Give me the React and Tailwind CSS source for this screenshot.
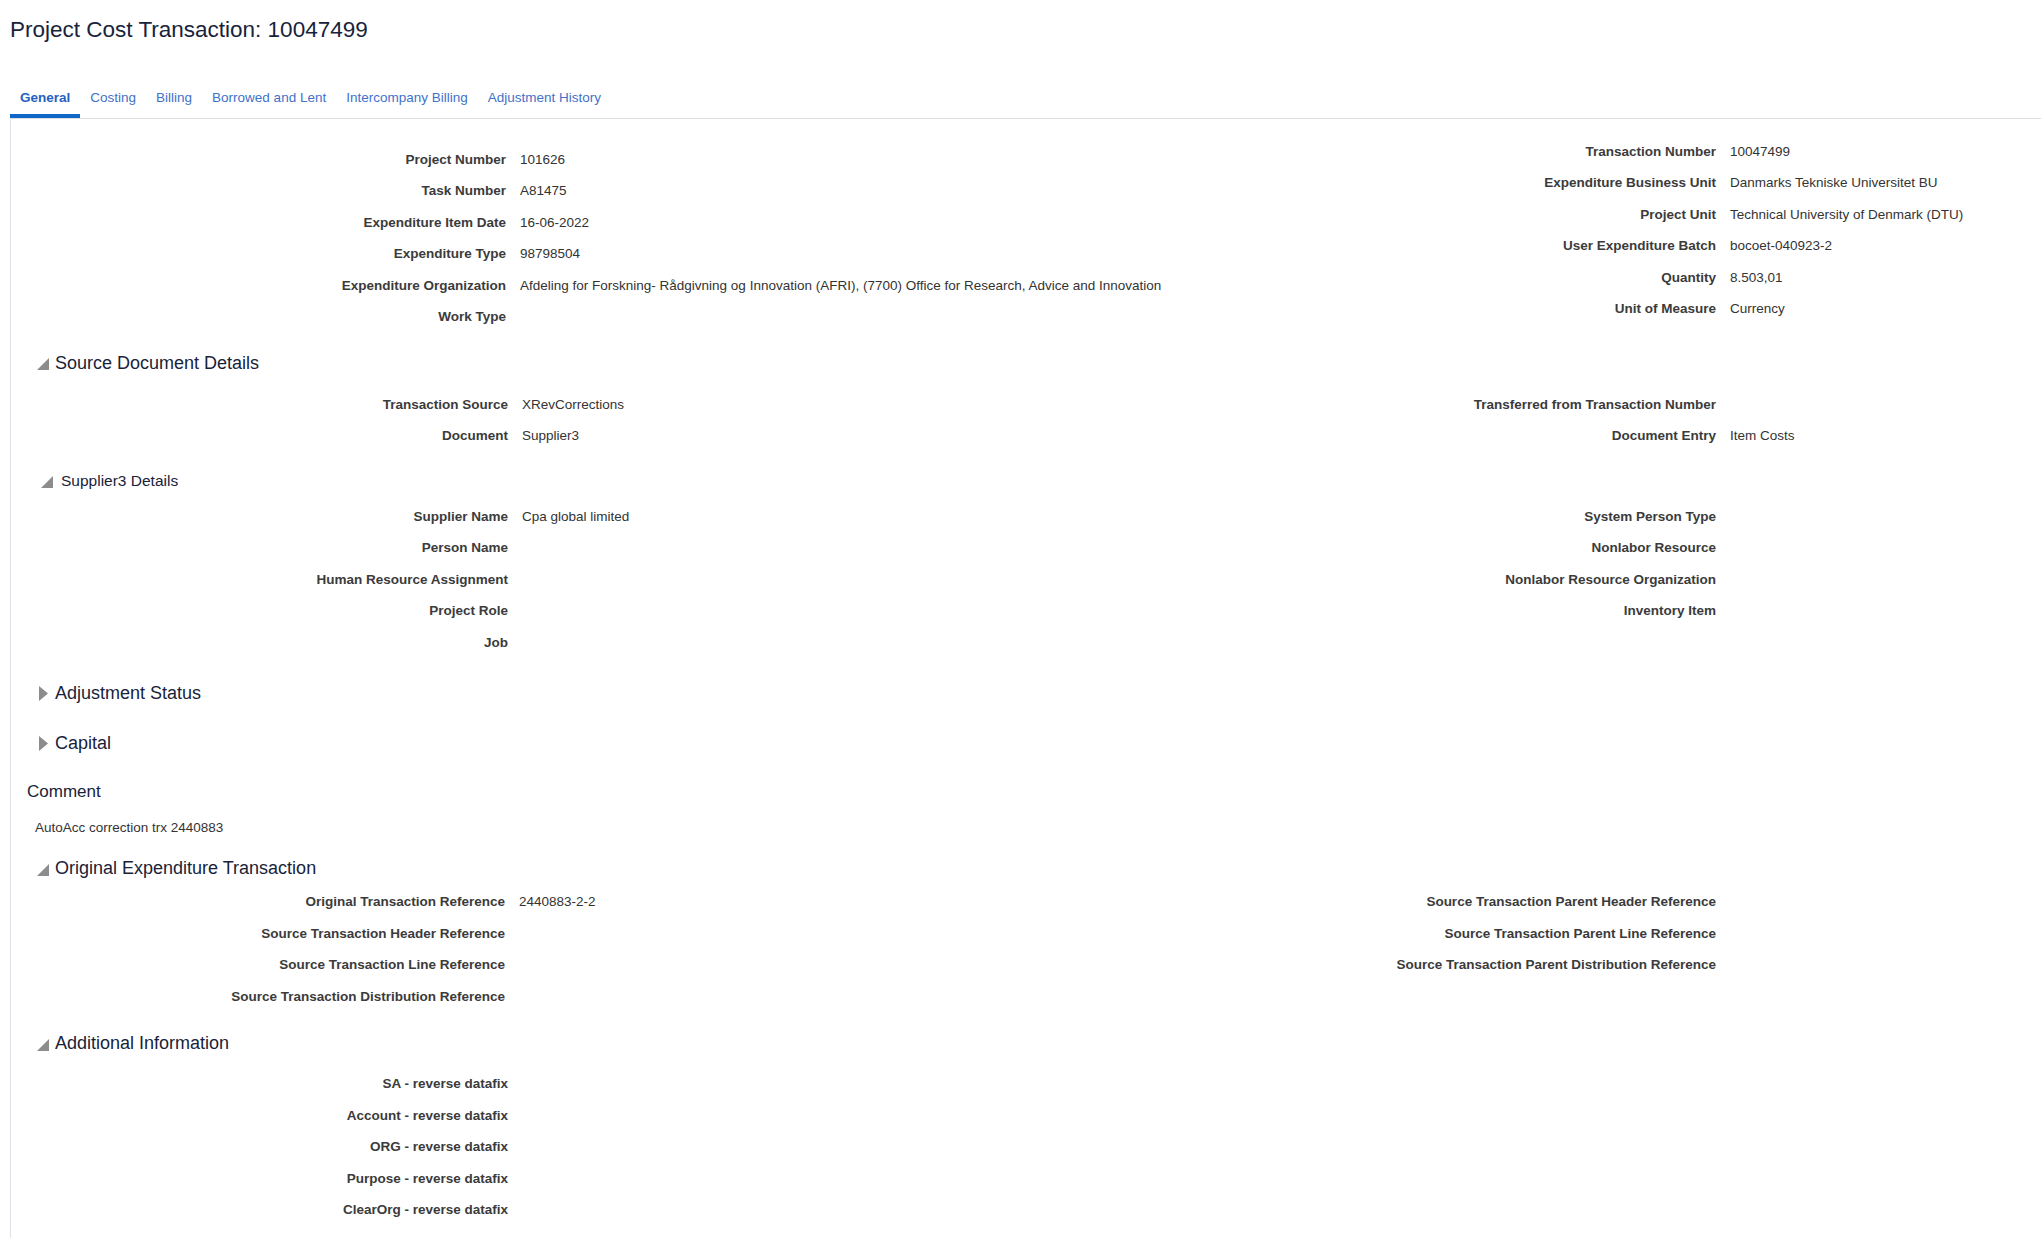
import React from "react";

const font = { fontFamily: '"Liberation Sans", Arial, sans-serif' };

const tabs = ["General", "Costing", "Billing", "Borrowed and Lent", "Intercompany Billing", "Adjustment History"];

function Expanded({ small }) {
    return (
        <svg width={small ? 12 : 12} height={small ? 12 : 12} viewBox="0 0 12 12" className="mt-[2px]">
            <polygon points="12,0 12,12 0,12" fill="#8c8c8c" />
        </svg>
    );
}

function Collapsed() {
    return (
        <svg width="9" height="15" viewBox="0 0 9 15" className="ml-[2px]">
            <polygon points="0,0 9,7.5 0,15" fill="#8c8c8c" />
        </svg>
    );
}

function Header({ title, open = true, small = false, className = "" }) {
    return (
        <div className={"flex h-[36px] items-center " + (small ? "pl-[30px] " : "pl-[24px] ") + className}>
            <div className={"flex w-[20px] " + (small ? "" : "pl-[2px]")}>
                {open ? <Expanded small={small} /> : <Collapsed />}
            </div>
            <span className={(small ? "text-[15.5px] " : "text-[18px] ") + "text-[#18233a]"}>{title}</span>
        </div>
    );
}

function Row({ label, value, labelWidth }) {
    return (
        <div className="flex h-[31.5px] items-center text-[13.5px]">
            <div className="shrink-0 text-right font-bold text-[#3b3b3b]" style={{ width: labelWidth }}>
                {label}
            </div>
            {value && <div className="ml-[14px] whitespace-nowrap text-[#333333]">{value}</div>}
        </div>
    );
}

function Fields({ left, right, leftTop = "", rightTop = "", leftWidth = 497 }) {
    return (
        <div className="flex">
            <div className={"w-[1189px] shrink-0 " + leftTop}>
                {left.map(([l, v]) => (
                    <Row key={l} label={l} value={v} labelWidth={leftWidth} />
                ))}
            </div>
            <div className={"flex-1 " + rightTop}>
                {right.map(([l, v]) => (
                    <Row key={l} label={l} value={v} labelWidth={516} />
                ))}
            </div>
        </div>
    );
}

export default function App() {
    return (
        <div className="min-h-screen bg-white" style={font}>
            <div className="flex h-[60px] items-center pl-[10px] text-[22.5px] text-[#18233a]">
                Project Cost Transaction: 10047499
            </div>

            <div className="ml-[10px] mt-[18px] flex border-b border-[#d9dde2]">
                {tabs.map((t, i) => (
                    <div
                        key={t}
                        className={
                            "flex h-[40px] items-center px-[10px] text-[13.5px] " +
                            (i === 0
                                ? "border-b-4 border-[#0f67c6] pt-[4px] font-bold text-[#2561bf]"
                                : "text-[#3f72c9]")
                        }
                    >
                        {t}
                    </div>
                ))}
            </div>

            <div className="ml-[10px] min-h-[1119px] border-l border-[#dde2e8] pb-[10px]">
                <Fields
                    leftTop="pt-[25px]"
                    rightTop="pt-[17px]"
                    leftWidth={495}
                    left={[
                        ["Project Number", "101626"],
                        ["Task Number", "A81475"],
                        ["Expenditure Item Date", "16-06-2022"],
                        ["Expenditure Type", "98798504"],
                        [
                            "Expenditure Organization",
                            "Afdeling for Forskning- Rådgivning og Innovation (AFRI), (7700) Office for Research, Advice and Innovation",
                        ],
                        ["Work Type", ""],
                    ]}
                    right={[
                        ["Transaction Number", "10047499"],
                        ["Expenditure Business Unit", "Danmarks Tekniske Universitet BU"],
                        ["Project Unit", "Technical University of Denmark (DTU)"],
                        ["User Expenditure Batch", "bocoet-040923-2"],
                        ["Quantity", "8.503,01"],
                        ["Unit of Measure", "Currency"],
                    ]}
                />

                <Header title="Source Document Details" className="mt-[12px]" />
                <div className="mt-[8px]">
                    <Fields
                        left={[
                            ["Transaction Source", "XRevCorrections"],
                            ["Document", "Supplier3"],
                        ]}
                        right={[
                            ["Transferred from Transaction Number", ""],
                            ["Document Entry", "Item Costs"],
                        ]}
                    />
                </div>

                <Header title="Supplier3 Details" small className="mt-[11px]" />
                <div className="mt-[2px]">
                    <Fields
                        left={[
                            ["Supplier Name", "Cpa global limited"],
                            ["Person Name", ""],
                            ["Human Resource Assignment", ""],
                            ["Project Role", ""],
                            ["Job", ""],
                        ]}
                        right={[
                            ["System Person Type", ""],
                            ["Nonlabor Resource", ""],
                            ["Nonlabor Resource Organization", ""],
                            ["Inventory Item", ""],
                        ]}
                    />
                </div>

                <Header title="Adjustment Status" open={false} className="mt-[17px]" />
                <Header title="Capital" open={false} className="mt-[14px]" />

                <div className="mt-[12px] flex h-[36px] items-center pl-[16px] text-[17px] text-[#18233a]">Comment</div>
                <div className="mt-[9px] flex h-[20px] items-center pl-[24px] text-[13.5px] text-[#333333]">
                    AutoAcc correction trx 2440883
                </div>

                <Header title="Original Expenditure Transaction" className="mt-[12px]" />
                <Fields
                    leftWidth={494}
                    left={[
                        ["Original Transaction Reference", "2440883-2-2"],
                        ["Source Transaction Header Reference", ""],
                        ["Source Transaction Line Reference", ""],
                        ["Source Transaction Distribution Reference", ""],
                    ]}
                    right={[
                        ["Source Transaction Parent Header Reference", ""],
                        ["Source Transaction Parent Line Reference", ""],
                        ["Source Transaction Parent Distribution Reference", ""],
                    ]}
                />

                <Header title="Additional Information" className="mt-[13px]" />
                <div className="mt-[7px]">
                    <Fields
                        left={[
                            ["SA - reverse datafix", ""],
                            ["Account - reverse datafix", ""],
                            ["ORG - reverse datafix", ""],
                            ["Purpose - reverse datafix", ""],
                            ["ClearOrg - reverse datafix", ""],
                        ]}
                        right={[]}
                    />
                </div>
            </div>
        </div>
    );
}
